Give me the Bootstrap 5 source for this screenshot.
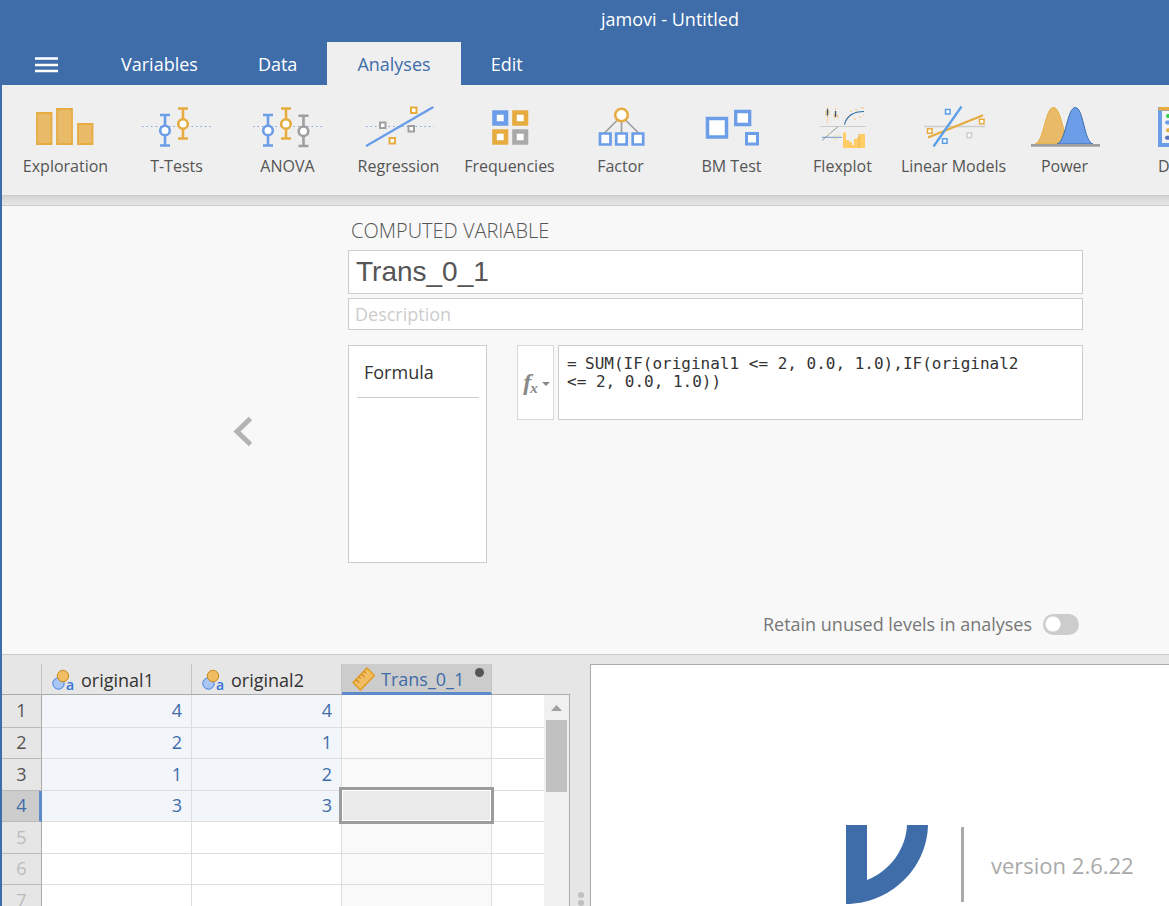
<!DOCTYPE html>
<html lang="en">
<head>
<meta charset="utf-8">
<meta name="viewport" content="width=device-width, initial-scale=1">
<title>jamovi - Untitled</title>
<link href="https://cdn.jsdelivr.net/npm/bootstrap@5.3.0/dist/css/bootstrap.min.css" rel="stylesheet">
<style>
  :root { --jm-blue: #3e6da9; --jm-sky: #6b9de8; --jm-gold: #e6ac40; --jm-grey: #9f9f9f; }
  body { font-family: "Open Sans", "Noto Sans", sans-serif; font-size: 18px; line-height: 24px; color: #333; background: #e6e6e6; }
  .titlebar { height: 42px; background: var(--jm-blue); padding-left: 171px; }
  .tabbar { height: 43px; background: var(--jm-blue); }
  .tabbar .menu-btn { width: 91px; padding: 2px 0 0 35px; }
  .tabbar .nav-link { height: 43px; padding: 10px 30px; color: #fff; border-radius: 0; text-align: center; }
  .tabbar .nav-link.active { background: #efefef; color: var(--jm-blue); }
  .frame { border-left: 2px solid var(--jm-blue); min-height: 0; }
  .ribbon { height: 110px; background: #efefef; padding-left: 8px; }
  .tool { display: flex; flex: 0 0 111px; flex-direction: column; align-items: center; padding: 15px 0 0; border: 0; background: none; color: #555; font-size: 16px; line-height: 24px; white-space: nowrap; }
  .tool svg { margin-bottom: 4px; }
  .ribbon-edge { height: 11px; border: solid #ccc; border-width: 1px 0; background: linear-gradient(#d4d4d4, #e8e8e8); }
  .editor { background: #f8f8f8; border-bottom: 1px solid #ccc; padding: 12px 86px 18px 231px; }
  .back-btn { width: 115px; padding: 8px 0 0; }
  .editor h1 { font-size: 20px; line-height: 26px; font-weight: 300; color: #555; margin: 0 0 6px; padding-left: 3px; }
  .boxed { border: 1px solid #ccc; border-radius: 0; background: #fff; }
  .name-input { height: 44px; font: 28px/34px "Liberation Sans", Arial, sans-serif; color: #555; padding: 3px 7px; margin-bottom: 4px; }
  .desc-input { height: 32px; padding: 2px 6px; font-size: 18px; margin-bottom: 15px; }
  .desc-input::placeholder { color: #ccc; }
  .mode-list { width: 139px; height: 218px; padding: 8px 7px 8px 8px; margin-right: 30px; }
  .mode-list button { border: 0; border-bottom: 1px solid #ccc; background: none; height: 44px; padding: 0 7px 8px; text-align: left; color: #333; }
  .fx-btn { width: 37px; height: 75px; border-color: #d8d8d8; color: #888; padding: 0 0 0 2px; margin-right: 4px; }
  .fx-btn i { font: italic bold 24px/24px "Liberation Serif", serif; }
  .fx-btn sub { font-size: 15px; bottom: -3px; left: -1px; }
  .fx-btn.dropdown-toggle::after { border-width: 4px; border-bottom: 0; margin-left: 3px; vertical-align: 4px; }
  .formula, .formula-sign { font: 16px/18px "DejaVu Sans Mono", monospace; color: #333; }
  .formula { height: 75px; padding: 9px 46px 9px 8px; text-indent: 18px; resize: none; display: block; }
  .formula-sign { position: absolute; left: 9px; top: 10px; }
  .retain { margin-top: 49px; padding-right: 4px; color: #777; }
  .retain .form-check-input { width: 36px; height: 21px; margin: 0 0 0 11px; border: 0; background-color: #ccc; float: none;
    background-image: radial-gradient(circle at 10px 10px, #fff 7px, #ccc 8px); background-size: 100% 100%; background-position: left; }
  .workspace { min-height: 0; padding-top: 9px; }
  .sheet { width: 568px; }
  .grid-table { width: 542px; table-layout: fixed; border-collapse: separate; border-spacing: 0; }
  .grid-table th { font-weight: 400; }
  .grid-table thead th { height: 31px; padding: 0; border-bottom: 1px solid #aaa; border-right: 1px solid #c4c4c4; }
  .grid-table thead th:last-child { border-right: 0; }
  .grid-table thead th.picked { background: #ccc; color: var(--jm-blue); border-bottom: 3px solid #5e8bc8; position: relative; }
  .grid-table thead .head-in { display: flex; align-items: center; padding: 2px 0 0 10px; gap: 6px; height: 28px; }
  .unsaved { position: absolute; right: 7px; top: 4px; width: 9px; height: 9px; border-radius: 50%; background: #555; }
  .grid-table tbody tr { height: 32px; }
  .grid-table tbody tr:nth-child(even) { height: 31px; }
  .grid-table tbody tr:first-child { height: 33px; }
  .grid-table td { padding: 0 9px 2px; text-align: right; background: #fff; border: solid #ddd; border-width: 0 1px 1px 0; color: var(--jm-blue); position: relative; }
  .grid-table td:last-child { border-right: 0; }
  .grid-table tbody th { padding: 0 0 2px; text-align: center; color: #555; border-right: 1px solid #aaa; border-bottom: 1px solid #bbb; }
  .grid-table tr.unused th { color: #bbb; }
  .grid-table tr.current th { background: #ccc; color: var(--jm-blue); border-right: 3px solid #5e8bc8; padding-left: 2px; }
  .grid-table td.filled { background: #f2f5f9; }
  .grid-table td.computed { background: #f9f9f9; }
  .cell-cursor { position: absolute; inset: -4px -3px -3px -3px; border: 3px solid #9c9c9c; background: #eaeaea; box-shadow: inset 0 0 0 1px #fff; z-index: 1; }
  .scroller { width: 26px; margin-top: 30px; border: solid #aaa; border-width: 1px 1px 0 0; background: #f0f0f0; }
  .scroller .arrow { display: block; margin: 10px 7px 9px; }
  .scroller .thumb { height: 72px; margin: 0 2px; background: #c1c1c1; }
  .splitter { width: 20px; padding-left: 2px; gap: 2px; }
  .splitter span { width: 6px; height: 6px; border-radius: 50%; background: #c0c0c0; }
  .results { border: solid #aaa; border-width: 1px 0 0 1px; background: #fff; padding: 160px 0 0 255px; }
  .version { font-size: 22px; line-height: 32px; color: #aaa; border-left: 3px solid #aaa; height: 75px; margin: 2px 0 0 33px; padding: 22px 0 0 27px; }
</style>
</head>
<body>
<div class="d-flex flex-column vh-100 overflow-hidden">
  <header class="titlebar flex-shrink-0 d-flex align-items-center justify-content-center text-white pb-1">jamovi - Untitled</header>

  <nav class="tabbar flex-shrink-0 d-flex">
    <button class="menu-btn border-0 bg-transparent d-flex align-items-center" type="button" aria-label="Menu">
      <svg width="23" height="17" viewBox="0 0 23 17"><path d="M0 2.500h23M0 9h23M0 15h23" stroke="#fff" stroke-width="2.400"/></svg>
    </button>
    <div class="nav">
      <a class="nav-link" href="#">Variables</a>
      <a class="nav-link" href="#">Data</a>
      <a class="nav-link active" href="#" aria-current="page">Analyses</a>
      <a class="nav-link" href="#">Edit</a>
    </div>
  </nav>

  <div class="frame d-flex flex-column flex-grow-1">
    <div class="ribbon flex-shrink-0 d-flex overflow-hidden">
      <button class="tool" type="button">
        <svg width="110" height="50" viewBox="-55 0 110 50"><g fill="#e9bb68" stroke="#e6ac40" stroke-width="1.800"><path d="M-29 13h14.500v31h-14.500zM-9 9h15v35h-15zM12 24h14.500v20h-14.500z"/></g></svg>
        Exploration</button>
      <button class="tool" type="button">
        <svg width="110" height="50" viewBox="-55 0 110 50"><path d="M-35 26.500H34" stroke="#7f9fd0" stroke-dasharray="1.500 3"/>
          <g stroke="#6b9de8" stroke-width="2.600" fill="none"><path d="M-12 15v31M-17 15h10M-17 45.500h10"/><circle cx="-12" cy="30.500" r="4.800" fill="#fff"/></g>
          <g stroke="#e6ac40" stroke-width="2.600" fill="none"><path d="M6 8v31M1 8.500h10M1 38.500h10"/><circle cx="6" cy="24" r="4.800" fill="#fff"/></g></svg>
        T-Tests</button>
      <button class="tool" type="button">
        <svg width="110" height="50" viewBox="-55 0 110 50"><path d="M-35 26.500H34" stroke="#7f9fd0" stroke-dasharray="1.500 3"/>
          <g stroke="#6b9de8" stroke-width="2.600" fill="none"><path d="M-20 15v31M-25 15h10M-25 45.500h10"/><circle cx="-20" cy="30.500" r="4.800" fill="#fff"/></g>
          <g stroke="#e6ac40" stroke-width="2.600" fill="none"><path d="M-2 8v31M-7 8.500h10M-7 38.500h10"/><circle cx="-2" cy="24" r="4.800" fill="#fff"/></g>
          <g stroke="#9f9f9f" stroke-width="2.600" fill="none"><path d="M15.500 16v30M10.500 15.800h10M10.500 46h10"/><circle cx="15.500" cy="31.300" r="4.800" fill="#fff"/></g></svg>
        ANOVA</button>
      <button class="tool" type="button">
        <svg width="110" height="50" viewBox="-55 0 110 50"><path d="M-33 26.500H35" stroke="#7f9fd0" stroke-dasharray="1.500 3"/>
          <path d="M-32 45.500L33.500 7.500" stroke="#6b9de8" stroke-width="2.500" stroke-linecap="round"/>
          <g fill="#fff" stroke-width="2"><path d="M-19 22.500h5.500v5.500h-5.500zM9.500 26h5.500v5.500h-5.500z" stroke="#9f9f9f"/><path d="M-9.500 38h5.500v5.500h-5.500zM12 7.500h5.500v5.500h-5.500z" stroke="#e6ac40"/></g></svg>
        Regression</button>
      <button class="tool" type="button">
        <svg width="110" height="50" viewBox="-55 0 110 50"><g fill="#fff" stroke-width="4.600"><path d="M-15.500 12.500h11.500v11h-11.500z" stroke="#6b9de8"/><path d="M4.500 12.500h11.500v11h-11.500zM-15.500 31.500h11.500v11h-11.500z" stroke="#e6ac40"/><path d="M4.500 31.500h11.500v11h-11.500z" stroke="#aaa"/></g></svg>
        Frequencies</button>
      <button class="tool" type="button">
        <svg width="110" height="50" viewBox="-55 0 110 50"><path d="M0.500 16L-17 33.500M0.500 16V33M0.500 16L18 33.500" stroke="#9f9f9f" stroke-width="1.700"/><circle cx="0.500" cy="15" r="6.300" fill="#fff" stroke="#e6ac40" stroke-width="2.600"/>
          <path d="M-21 33.500h10.500v11h-10.500zM-4.800 33.500h10.500v11h-10.500zM11.700 33.500h10.500v11h-10.500z" fill="#fff" stroke="#6b9de8" stroke-width="2.700"/></svg>
        Factor</button>
      <button class="tool" type="button">
        <svg width="110" height="50" viewBox="-55 0 110 50"><g fill="#fff" stroke="#6b9de8"><path d="M-24.500 18.500h19v18.500h-19z" stroke-width="3.500"/><path d="M3.700 11.500h14v13h-14z" stroke-width="3.300"/><path d="M14.500 33.500h11v10.500h-11z" stroke-width="3"/></g></svg>
        BM Test</button>
      <button class="tool" type="button">
        <svg width="110" height="50" viewBox="-55 0 110 50"><path d="M-23 26.500H23" stroke="#ccc"/>
          <g fill="none"><path d="M-15.500 7v16M-7.500 8v10M-18 12h5M-18 14.500h4M-10 15h6M-9 17h5" stroke="#f4c98b" stroke-width="1.400" stroke-dasharray="2 1"/><path d="M-15.500 9v6.500M-7.500 11v6" stroke="#37536f" stroke-width="1.300"/>
          <path d="M3 20l3-4M7 11h2M12 10h2M18 8h3M16 17h2M20 15h1M11 19h2" stroke="#f6cf99" stroke-width="1.300"/><path d="M1.500 24.500C4 15 11 11.500 21 11.500" stroke="#2f6fa8" stroke-width="1.200"/>
          <path d="M-21 40.500L-5 26.500" stroke="#999"/><path d="M-21 37.300H-1" stroke="#6f9cc9"/><path d="M-16 34h3M-9 36h3M-10 39h4M-5 35h2" stroke="#efdcb5"/></g>
          <path d="M0 48V32.500h3V40h3v2h3v3h2v-6h3v-2h2v-3h6v14z" fill="#ffcc66"/><path d="M16 34v14" stroke="#d9a94b" stroke-width=".7"/></svg>
        Flexplot</button>
      <button class="tool" type="button">
        <svg width="110" height="50" viewBox="-55 0 110 50"><path d="M-30 26.500H31" stroke="#ccc" stroke-width="1.500"/><g stroke-width="2.200"><path d="M-26 37.500L29 15.300" stroke="#e6ac40"/><path d="M-20.500 46.500L7.500 6.500" stroke="#5a9de8"/></g>
          <g fill="#fff" stroke-width="1.500"><path d="M-8.500 9.500h4.500v4.500h-4.500zM-11.500 38.800h4.500v4.500h-4.500z" stroke="#5a9de8"/><path d="M-26.500 28.800h4.500v4.500h-4.500zM25.500 19.200h4.500v4.500h-4.500z" stroke="#e6ac40"/><path d="M13 33h4.500v4.500h-4.500z" stroke="#ccc"/></g></svg>
        Linear Models</button>
      <button class="tool" type="button">
        <svg width="110" height="50" viewBox="-55 0 110 50"><path d="M-30 44C-21 42-20 7.500-11.500 7.500S-2 42 7 44z" fill="#e9bb68" stroke="#e6ac40"/><path d="M-8 44C1 42 2 7.500 10.300 7.500S19 42 28 44z" fill="#6b9de8" stroke="#3e6da9"/><path d="M-34 45.300H35" stroke="#9f9f9f" stroke-width="2.700"/></svg>
        Power</button>
      <button class="tool" type="button">
        <svg width="110" height="50" viewBox="-55 0 110 50"><path d="M-16 9h32v36h-32z" fill="#f3f3f3" stroke="#6b9de8" stroke-width="4"/><path d="M-16 8.700H16" stroke="#e6ac40" stroke-width="3.500" stroke-linecap="round"/><g stroke-width="4" stroke-linecap="round"><path d="M-8 16h1" stroke="#2ecc50"/><path d="M-9 22.500H8" stroke="#6b9de8"/><path d="M-8 30.300H8" stroke="#e6ac40"/><path d="M-9 37.700H8" stroke="#5a6fb8"/></g></svg>
        Data</button>
    </div>
    <div class="ribbon-edge flex-shrink-0"></div>

    <main class="editor flex-shrink-0 d-flex">
      <button class="back-btn flex-shrink-0 border-0 bg-transparent text-start" type="button" aria-label="Previous variable">
        <svg width="20" height="31" viewBox="0 0 20 31"><path d="M17.500 2.500L4 15.500L17.500 28.500" fill="none" stroke="#b3b3b3" stroke-width="5"/></svg>
      </button>
      <div class="flex-grow-1">
        <h1>COMPUTED VARIABLE</h1>
        <input class="boxed name-input d-block w-100" type="text" value="Trans_0_1" aria-label="Variable name">
        <input class="boxed desc-input d-block w-100" type="text" placeholder="Description" aria-label="Description">
        <div class="d-flex align-items-start">
          <div class="boxed mode-list flex-shrink-0"><button class="w-100" type="button">Formula</button></div>
          <button class="boxed fx-btn dropdown-toggle flex-shrink-0" type="button" aria-label="Functions"><i>f<sub>x</sub></i></button>
          <div class="position-relative flex-grow-1">
            <label class="formula-sign" for="formula">=</label>
            <textarea class="boxed formula w-100" id="formula" spellcheck="false">SUM(IF(original1 &lt;= 2, 0.0, 1.0),IF(original2 &lt;= 2, 0.0, 1.0))</textarea>
          </div>
        </div>
        <div class="retain d-flex justify-content-end align-items-center form-switch">
          <label for="retain">Retain unused levels in analyses</label>
          <input class="form-check-input" type="checkbox" role="switch" id="retain">
        </div>
      </div>
    </main>

    <div class="workspace flex-grow-1 d-flex">
      <section class="sheet flex-shrink-0 d-flex overflow-hidden">
        <div>
        <table class="grid-table">
          <colgroup><col style="width:40px"><col style="width:150px"><col style="width:150px"><col style="width:150px"><col></colgroup>
          <thead><tr>
            <th></th>
            <th><div class="head-in"><svg width="23" height="23" viewBox="0 0 23 23"><circle cx="6.500" cy="14.500" r="5.700" fill="#a9c6f2" stroke="#3f7fe0"/><circle cx="11" cy="7" r="5.700" fill="#f0bd62" stroke="#c98a1c"/><text x="14" y="20.500" font-size="14" font-weight="600" fill="#3273d8">a</text></svg>original1</div></th>
            <th><div class="head-in"><svg width="23" height="23" viewBox="0 0 23 23"><circle cx="6.500" cy="14.500" r="5.700" fill="#a9c6f2" stroke="#3f7fe0"/><circle cx="11" cy="7" r="5.700" fill="#f0bd62" stroke="#c98a1c"/><text x="14" y="20.500" font-size="14" font-weight="600" fill="#3273d8">a</text></svg>original2</div></th>
            <th class="picked"><div class="head-in"><svg width="23" height="24" viewBox="0 0 23 24"><path d="M1 15.500L15 1l7.500 7.500L8.500 23z" fill="#f0bd62" stroke="#e09a1c" stroke-width="1.300" stroke-linejoin="round"/><path d="M4 12.500l3 3M6.700 9.700l2 2M9.400 7l3 3M12 4.300l2 2" stroke="#c98a1c" stroke-width="1.200"/></svg>Trans_0_1</div><span class="unsaved"></span></th>
            <th></th>
          </tr></thead>
          <tbody>
            <tr><th>1</th><td class="filled">4</td><td class="filled">4</td><td class="computed"></td><td></td></tr>
            <tr><th>2</th><td class="filled">2</td><td class="filled">1</td><td class="computed"></td><td></td></tr>
            <tr><th>3</th><td class="filled">1</td><td class="filled">2</td><td class="computed"></td><td></td></tr>
            <tr class="current"><th>4</th><td class="filled">3</td><td class="filled">3</td><td class="computed"><div class="cell-cursor"></div></td><td></td></tr>
            <tr class="unused"><th>5</th><td></td><td></td><td class="computed"></td><td></td></tr>
            <tr class="unused"><th>6</th><td></td><td></td><td class="computed"></td><td></td></tr>
            <tr class="unused"><th>7</th><td></td><td></td><td class="computed"></td><td></td></tr>
          </tbody>
        </table>
        </div>
        <div class="scroller flex-shrink-0">
          <svg class="arrow" width="11" height="6" viewBox="0 0 11 6"><path d="M5.500 0L11 6H0z" fill="#a0a0a0"/></svg>
          <div class="thumb"></div>
        </div>
      </section>
      <div class="splitter flex-shrink-0 d-flex flex-column align-items-center justify-content-end"><span></span><span></span></div>
      <section class="results flex-grow-1 d-flex align-items-start">
        <svg class="flex-shrink-0" width="82" height="80" viewBox="0 0 82 80"><path d="M0 0H21V55C44 46 60 24 61 0H82C81 44 44 79 0 79z" fill="#3e6da9"/></svg>
        <div class="version text-nowrap">version 2.6.22</div>
      </section>
    </div>
  </div>
</div>
<script src="https://cdn.jsdelivr.net/npm/bootstrap@5.3.0/dist/js/bootstrap.bundle.min.js"></script>
</body>
</html>
